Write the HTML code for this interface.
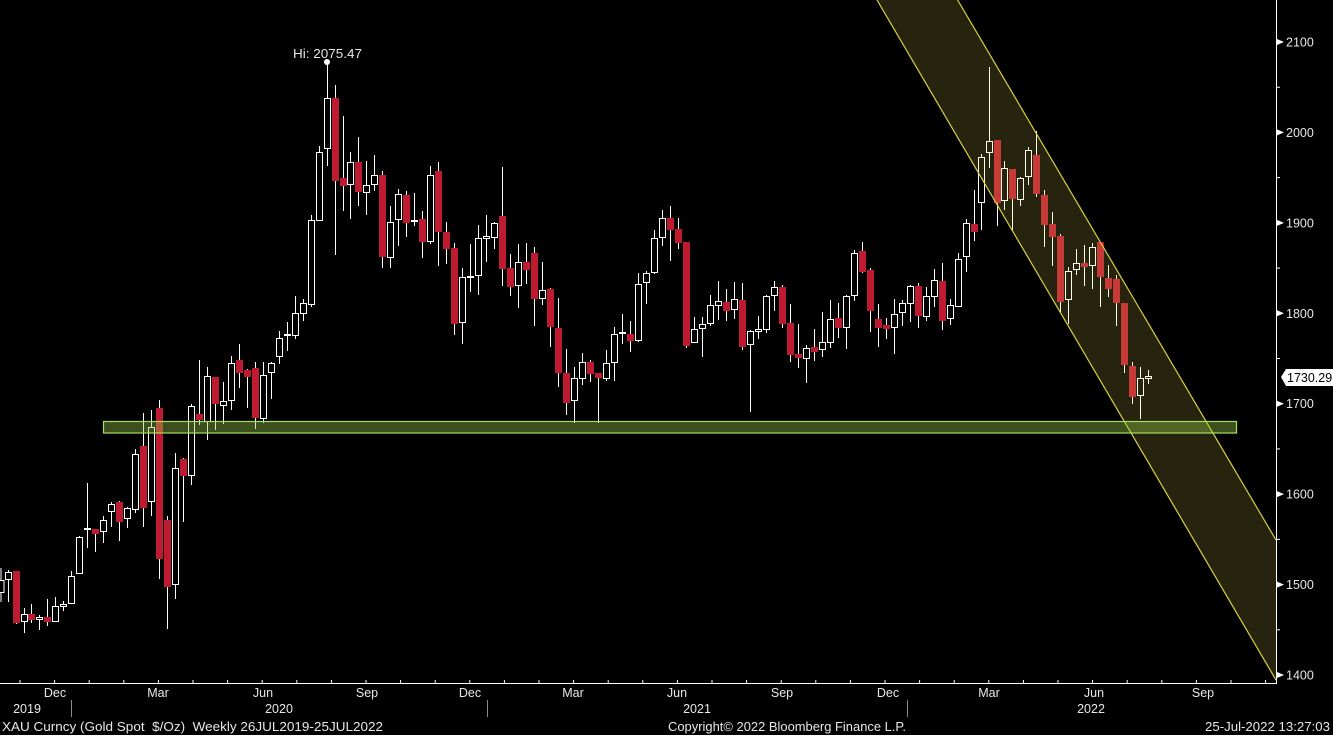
<!DOCTYPE html>
<html><head><meta charset="utf-8"><style>
html,body{margin:0;padding:0;background:#000;width:1333px;height:735px;overflow:hidden}
svg text{font-family:"Liberation Sans",sans-serif;}
</style></head><body>
<svg id="c" width="1333" height="735" xmlns="http://www.w3.org/2000/svg">
<rect width="1333" height="735" fill="#000"/>
<g id="candles"></g>
<polygon points="877,0 957.6,0 1276,540 1276,680" fill="rgba(255,240,100,0.15)"/>
<line x1="957.6" y1="0" x2="1276" y2="540" stroke="#d8d040" stroke-width="1.2"/>
<line x1="877" y1="0" x2="1276" y2="680" stroke="#d8d040" stroke-width="1.2"/>
<rect x="103.5" y="421.5" width="1133" height="11.5" fill="rgba(150,200,70,0.4)" stroke="#a6e060" stroke-width="1.2"/>
<circle cx="327" cy="62" r="3" fill="#fff"/>
<text x="293" y="58" font-size="13" fill="#e8e8e8" textLength="69" lengthAdjust="spacingAndGlyphs">Hi: 2075.47</text>
<line x1="1276.5" y1="0" x2="1276.5" y2="684" stroke="#fff" stroke-width="1"/>
<line x1="0" y1="683.5" x2="1277" y2="683.5" stroke="#fff" stroke-width="1"/>
<g id="axis" fill="#e8e8e8" font-size="12.5"></g>
<g id="xaxis" fill="#e8e8e8" font-size="12.5">
<text x="55" y="697" text-anchor="middle">Dec</text>
<text x="158" y="697" text-anchor="middle">Mar</text>
<text x="263" y="697" text-anchor="middle">Jun</text>
<text x="367" y="697" text-anchor="middle">Sep</text>
<text x="470" y="697" text-anchor="middle">Dec</text>
<text x="573" y="697" text-anchor="middle">Mar</text>
<text x="677" y="697" text-anchor="middle">Jun</text>
<text x="782" y="697" text-anchor="middle">Sep</text>
<text x="888" y="697" text-anchor="middle">Dec</text>
<text x="989" y="697" text-anchor="middle">Mar</text>
<text x="1094" y="697" text-anchor="middle">Jun</text>
<text x="1203" y="697" text-anchor="middle">Sep</text>
<text x="27" y="713" text-anchor="middle">2019</text>
<text x="279" y="713" text-anchor="middle">2020</text>
<text x="697" y="713" text-anchor="middle">2021</text>
<text x="1091" y="713" text-anchor="middle">2022</text>
<line x1="71.5" y1="700" x2="71.5" y2="717" stroke="#888"/>
<line x1="487.5" y1="700" x2="487.5" y2="717" stroke="#888"/>
<line x1="907.5" y1="700" x2="907.5" y2="717" stroke="#888"/>
<text x="2" y="731" font-size="13" xml:space="preserve" textLength="381" lengthAdjust="spacingAndGlyphs">XAU Curncy (Gold Spot  $/Oz)  Weekly 26JUL2019-25JUL2022</text>
<text x="668" y="731" font-size="13" textLength="238" lengthAdjust="spacingAndGlyphs">Copyright© 2022 Bloomberg Finance L.P.</text>
<text x="1205" y="731" font-size="13" textLength="125" lengthAdjust="spacingAndGlyphs">25-Jul-2022 13:27:03</text>
</g>
<polygon points="1281,377 1286,369 1333,369 1333,386 1286,386" fill="#fff"/>
<text x="1287" y="382" font-size="12.5" fill="#000">1730.29</text>
</svg>
<script>
var D=[
[0.5,'w',580,593,568,602],[8,'w',572,580,570,602],[16,'r',571,623,571,624],[24,'w',614,622,608,633],[31,'r',614,620,604,623],[39,'w',617,620,615,630],[47,'r',617,622,599,626],[55,'w',606,622,597,622],[63,'w',604,607,601,611],[71,'w',576,604,571,604],[79,'w',537,574,536,574],[87,'d',529,529,483,548],[95,'r',529,534,529,552],[103,'w',520,532,516,543],[111,'w',504,512,502,527],[119,'r',502,522,501,541],[127,'w',508,519,507,528],[135,'w',454,510,449,513],[143,'r',446,508,413,527],[151,'w',427,502,410,516],[159,'r',408,559,400,579],[167,'r',520,587,516,629],[175,'w',468,585,453,599],[183,'r',459,476,458,522],[191,'w',406,476,404,485],[199,'r',414,420,360,425],[207,'w',376,422,367,440],[215,'r',377,404,377,430],[223,'w',401,406,382,424],[231,'w',363,401,356,410],[239,'r',360,373,344,388],[247,'r',370,377,369,408],[255,'r',368,418,362,429],[263,'w',375,419,362,423],[271,'w',363,373,362,399],[279,'w',338,357,331,364],[287,'d',335,335,322,351],
[295,'w',313,336,296,339],[303,'w',303,314,299,321],[311,'w',220,305,215,307],[319,'w',152,221,146,221],[327,'w',98,149,62,166],[335,'r',98,181,85,255],[343,'r',178,186,116,211],[350,'w',162,185,152,219],[358,'r',162,192,137,206],[366,'w',185,193,161,215],[374,'w',175,185,155,191],[382,'r',175,257,171,268],[390,'w',222,258,206,268],[398,'w',194,220,189,246],[406,'r',195,223,191,237],[414,'d',221,221,193,226],[422,'r',219,242,211,258],[430,'w',175,242,166,244],[438,'r',171,232,162,266],[446,'r',232,249,222,264],[454,'r',248,324,243,335],[462,'w',277,323,268,344],[470,'d',277,277,244,292],[478,'w',238,276,225,295],[486,'w',236,239,215,262],[494,'w',223,238,222,249],[502,'r',216,269,167,286],[510,'r',268,287,254,296],[518,'w',262,286,244,308],[526,'r',262,270,243,284],[534,'r',253,299,247,326],[542,'w',290,299,262,305],[550,'r',289,327,288,347],[558,'r',328,373,298,387],[566,'r',373,403,349,415],[574,'w',378,401,367,423],[582,'w',362,379,353,385],[590,'r',362,374,360,382],[598,'r',373,378,373,423],[606,'w',363,379,350,381],[614,'w',334,363,327,381],[622,'d',333,333,314,344],[630,'r',334,341,321,352],
[638,'w',284,341,273,342],[646,'w',273,283,271,304],[654,'w',238,273,230,274],[662,'w',218,238,210,246],[670,'r',218,230,206,261],[678,'r',229,243,218,249],[686,'r',242,346,242,348],[694,'w',329,343,317,343],[702,'w',324,329,317,357],[710,'w',305,324,295,326],[718,'w',301,306,281,320],[726,'r',302,311,289,321],[734,'w',299,310,282,319],[742,'r',300,347,283,350],[750,'w',331,345,330,412],[758,'w',329,332,316,339],[766,'w',296,330,295,333],[774,'w',287,296,281,311],[782,'r',287,324,285,328],[790,'r',323,355,304,362],[798,'r',354,358,324,368],[806,'w',348,359,345,383],[814,'r',347,352,329,361],[822,'w',342,350,312,357],[830,'w',319,343,300,348],[838,'r',318,328,303,338],[846,'w',296,328,295,349],[854,'w',253,296,250,301],[862,'r',251,272,242,273],[870,'r',270,311,268,332],[878,'r',319,328,304,347],[886,'r',325,329,318,339],[894,'w',314,328,299,354],[902,'w',303,313,300,326],[910,'w',286,304,285,322],[918,'r',286,316,283,328],[926,'w',296,317,287,321],[934,'w',280,297,269,307],[942,'r',281,321,263,330],[950,'w',305,319,299,325],[958,'w',259,307,253,307],[966,'w',223,257,219,272],[974,'r',224,232,190,241],
[981,'w',157,203,154,230],[989,'w',141,153,67,168],[997,'r',140,203,140,226],[1004,'w',168,201,161,210],[1012,'r',169,199,169,230],[1020,'w',178,200,177,206],[1028,'w',150,177,147,185],[1036,'r',155,194,131,197],[1044,'r',195,225,190,247],[1052,'r',224,237,212,266],[1060,'r',236,302,234,312],[1068,'w',271,300,267,324],[1076,'w',263,270,249,275],[1084,'r',263,267,245,286],[1092,'w',247,266,243,289],[1100,'r',242,277,242,307],[1108,'r',278,289,265,297],[1116,'r',279,303,275,326],[1124,'r',303,365,303,373],[1132,'r',366,397,362,404],[1140,'w',378,396,367,419],[1148,'w',376,379,370,384]
];
var s='';
D.forEach(function(d){
 var x=d[0],t=d[1];
 s+='<line x1="'+(x+0.5)+'" y1="'+d[4]+'" x2="'+(x+0.5)+'" y2="'+d[5]+'" stroke="#fff" stroke-width="1"/>';
 if(t=='r') s+='<rect x="'+(x-3)+'" y="'+d[2]+'" width="7" height="'+Math.max(2,d[3]-d[2])+'" fill="#be1a30"/>';
 else if(t=='w') s+='<rect x="'+(x-2.5)+'" y="'+(d[2]+0.5)+'" width="6" height="'+Math.max(1,d[3]-d[2]-1)+'" fill="#000" stroke="#fff" stroke-width="1"/>';
 else s+='<rect x="'+(x-3)+'" y="'+(d[2]-1)+'" width="7" height="2" fill="#fff"/>';
});
document.getElementById('candles').innerHTML=s;
var a='';
for(var p=1400;p<=2100;p+=50){
 var y=42+(2100-p)*0.9043;
 if(p%100==0){a+='<polygon points="1277,'+(y-3)+' 1284,'+y+' 1277,'+(y+3)+'" fill="#fff"/><text x="1286" y="'+(y+4.5)+'">'+p+'</text>';}
 else a+='<line x1="1277" y1="'+y+'" x2="1280" y2="'+y+'" stroke="#fff"/>';
}
document.getElementById('axis').innerHTML=a;
var t='';
for(var x=20;x<1276;x+=34.6){t+='<line x1="'+x+'" y1="680" x2="'+x+'" y2="684" stroke="#fff"/>';}
document.getElementById('xaxis').insertAdjacentHTML('beforeend',t);
</script>
</body></html>
